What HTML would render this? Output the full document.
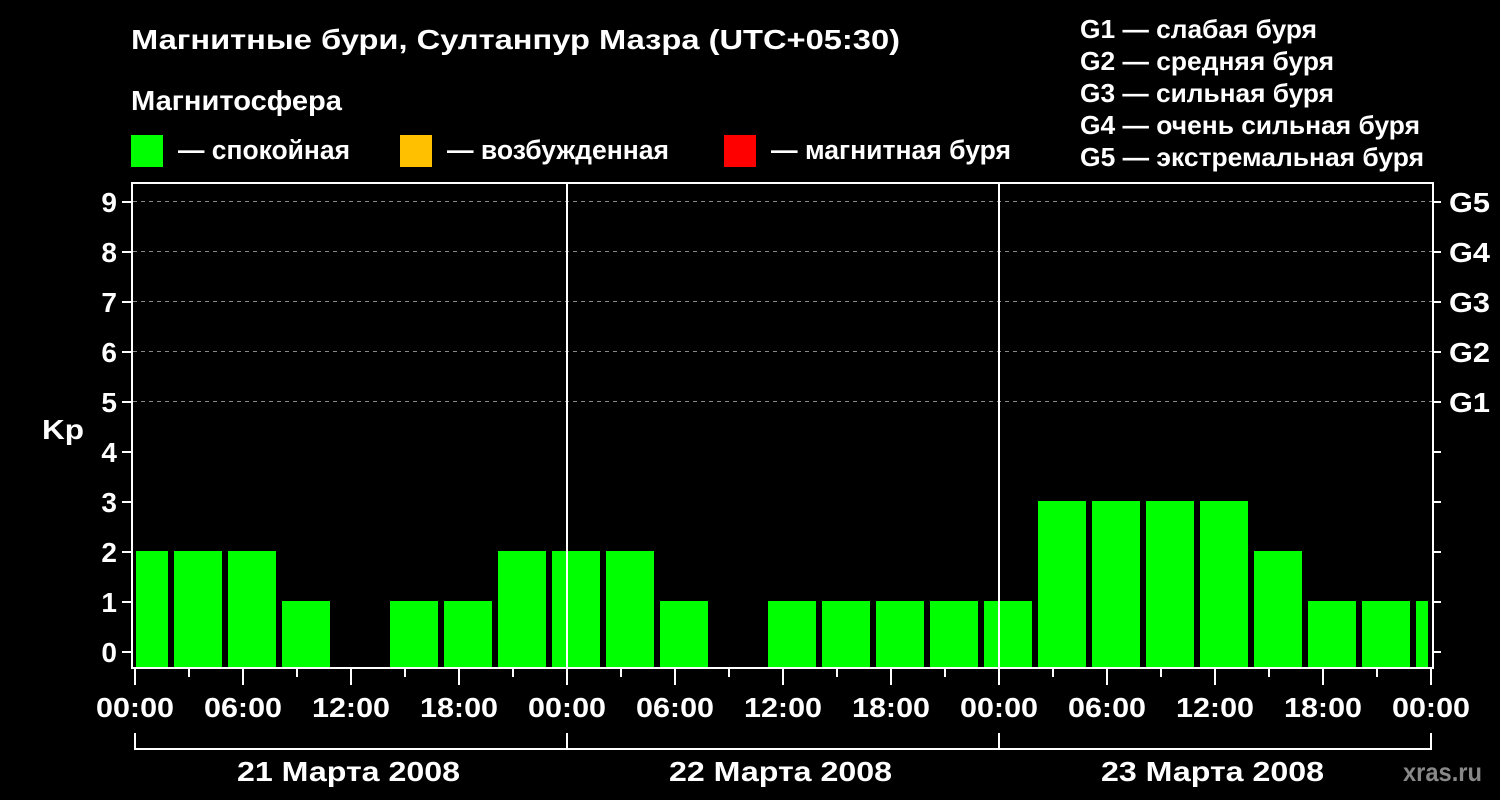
<!DOCTYPE html>
<html><head><meta charset="utf-8"><style>
html,body{margin:0;padding:0;background:#000;width:1500px;height:800px;overflow:hidden}
svg{display:block;font-family:"Liberation Sans",sans-serif;font-weight:bold;fill:#fff}
</style></head><body>
<svg width="1500" height="800" viewBox="0 0 1500 800" xmlns="http://www.w3.org/2000/svg">
<rect width="1500" height="800" fill="#000"/>
<g font-size="28">
<text x="131" y="49" textLength="769" lengthAdjust="spacingAndGlyphs">Магнитные бури, Султанпур Мазра (UTC+05:30)</text>
<text x="131" y="110" textLength="211" lengthAdjust="spacingAndGlyphs">Магнитосфера</text>
</g>
<rect x="131" y="135" width="32" height="32" fill="#00ff00"/>
<text x="178" y="159" font-size="27" textLength="172" lengthAdjust="spacingAndGlyphs">— спокойная</text>
<rect x="400" y="135" width="32" height="32" fill="#ffc000"/>
<text x="447" y="159" font-size="27" textLength="222" lengthAdjust="spacingAndGlyphs">— возбужденная</text>
<rect x="724" y="135" width="32" height="32" fill="#ff0000"/>
<text x="771" y="159" font-size="27" textLength="240" lengthAdjust="spacingAndGlyphs">— магнитная буря</text>
<g font-size="26">
<text x="1080" y="38" textLength="237" lengthAdjust="spacingAndGlyphs">G1 — слабая буря</text>
<text x="1080" y="70" textLength="254" lengthAdjust="spacingAndGlyphs">G2 — средняя буря</text>
<text x="1080" y="102" textLength="254" lengthAdjust="spacingAndGlyphs">G3 — сильная буря</text>
<text x="1080" y="134" textLength="340" lengthAdjust="spacingAndGlyphs">G4 — очень сильная буря</text>
<text x="1080" y="166" textLength="344" lengthAdjust="spacingAndGlyphs">G5 — экстремальная буря</text>
</g>
<g stroke="#888" stroke-dasharray="4,4" stroke-width="1">
<line x1="133" y1="201.5" x2="1432" y2="201.5"/>
<line x1="133" y1="251.5" x2="1432" y2="251.5"/>
<line x1="133" y1="301.5" x2="1432" y2="301.5"/>
<line x1="133" y1="351.5" x2="1432" y2="351.5"/>
<line x1="133" y1="401.5" x2="1432" y2="401.5"/>
</g>
<g fill="#00ff00">
<rect x="136" y="551" width="32" height="117"/>
<rect x="174" y="551" width="48" height="117"/>
<rect x="228" y="551" width="48" height="117"/>
<rect x="282" y="601" width="48" height="67"/>
<rect x="390" y="601" width="48" height="67"/>
<rect x="444" y="601" width="48" height="67"/>
<rect x="498" y="551" width="48" height="117"/>
<rect x="552" y="551" width="48" height="117"/>
<rect x="606" y="551" width="48" height="117"/>
<rect x="660" y="601" width="48" height="67"/>
<rect x="768" y="601" width="48" height="67"/>
<rect x="822" y="601" width="48" height="67"/>
<rect x="876" y="601" width="48" height="67"/>
<rect x="930" y="601" width="48" height="67"/>
<rect x="984" y="601" width="48" height="67"/>
<rect x="1038" y="501" width="48" height="167"/>
<rect x="1092" y="501" width="48" height="167"/>
<rect x="1146" y="501" width="48" height="167"/>
<rect x="1200" y="501" width="48" height="167"/>
<rect x="1254" y="551" width="48" height="117"/>
<rect x="1308" y="601" width="48" height="67"/>
<rect x="1362" y="601" width="48" height="67"/>
<rect x="1416" y="601" width="12" height="67"/>
</g>
<g stroke="#fff" stroke-width="2" fill="none">
<rect x="132" y="183" width="1301" height="485"/>
<line x1="567" y1="183" x2="567" y2="668"/>
<line x1="999" y1="183" x2="999" y2="668"/>
<path d="M122 652H132M122 602H132M122 552H132M122 502H132M122 452H132M122 402H132M122 352H132M122 302H132M122 252H132M122 202H132"/>
<path d="M1433 652H1441M1433 602H1441M1433 552H1441M1433 502H1441M1433 452H1441M1433 402H1441M1433 352H1441M1433 302H1441M1433 252H1441M1433 202H1441"/>
<path d="M135 668V685M189 668V677M243 668V685M297 668V677M351 668V685M405 668V677M459 668V685M513 668V677M567 668V685M621 668V677M675 668V685M729 668V677M783 668V685M837 668V677M891 668V685M945 668V677M999 668V685M1053 668V677M1107 668V685M1161 668V677M1215 668V685M1269 668V677M1323 668V685M1377 668V677M1431 668V685"/>
<path d="M135 733V749H1431V733M567 733V749M999 733V749"/>
</g>
<g font-size="28" text-anchor="end">
<text x="117" y="662">0</text><text x="117" y="612">1</text><text x="117" y="562">2</text><text x="117" y="512">3</text><text x="117" y="462">4</text><text x="117" y="412">5</text><text x="117" y="362">6</text><text x="117" y="312">7</text><text x="117" y="262">8</text><text x="117" y="212">9</text>
</g>
<text x="42" y="439" font-size="28" textLength="42" lengthAdjust="spacingAndGlyphs">Kp</text>
<g font-size="28">
<text x="1449" y="212" textLength="41" lengthAdjust="spacingAndGlyphs">G5</text><text x="1449" y="262" textLength="41" lengthAdjust="spacingAndGlyphs">G4</text><text x="1449" y="312" textLength="41" lengthAdjust="spacingAndGlyphs">G3</text><text x="1449" y="362" textLength="41" lengthAdjust="spacingAndGlyphs">G2</text><text x="1449" y="412" textLength="41" lengthAdjust="spacingAndGlyphs">G1</text>
</g>
<g font-size="28">
<text x="96" y="717" textLength="78" lengthAdjust="spacingAndGlyphs">00:00</text><text x="204" y="717" textLength="78" lengthAdjust="spacingAndGlyphs">06:00</text><text x="312" y="717" textLength="78" lengthAdjust="spacingAndGlyphs">12:00</text><text x="420" y="717" textLength="78" lengthAdjust="spacingAndGlyphs">18:00</text>
<text x="528" y="717" textLength="78" lengthAdjust="spacingAndGlyphs">00:00</text><text x="636" y="717" textLength="78" lengthAdjust="spacingAndGlyphs">06:00</text><text x="744" y="717" textLength="78" lengthAdjust="spacingAndGlyphs">12:00</text><text x="852" y="717" textLength="78" lengthAdjust="spacingAndGlyphs">18:00</text>
<text x="960" y="717" textLength="78" lengthAdjust="spacingAndGlyphs">00:00</text><text x="1068" y="717" textLength="78" lengthAdjust="spacingAndGlyphs">06:00</text><text x="1176" y="717" textLength="78" lengthAdjust="spacingAndGlyphs">12:00</text><text x="1284" y="717" textLength="78" lengthAdjust="spacingAndGlyphs">18:00</text>
<text x="1392" y="717" textLength="78" lengthAdjust="spacingAndGlyphs">00:00</text>
</g>
<g font-size="28">
<text x="237" y="781" textLength="223" lengthAdjust="spacingAndGlyphs">21 Марта 2008</text>
<text x="669" y="781" textLength="223" lengthAdjust="spacingAndGlyphs">22 Марта 2008</text>
<text x="1101" y="781" textLength="223" lengthAdjust="spacingAndGlyphs">23 Марта 2008</text>
</g>
<text x="1403" y="781" font-size="26" textLength="79" lengthAdjust="spacingAndGlyphs" fill="#888">xras.ru</text>
</svg>
</body></html>
